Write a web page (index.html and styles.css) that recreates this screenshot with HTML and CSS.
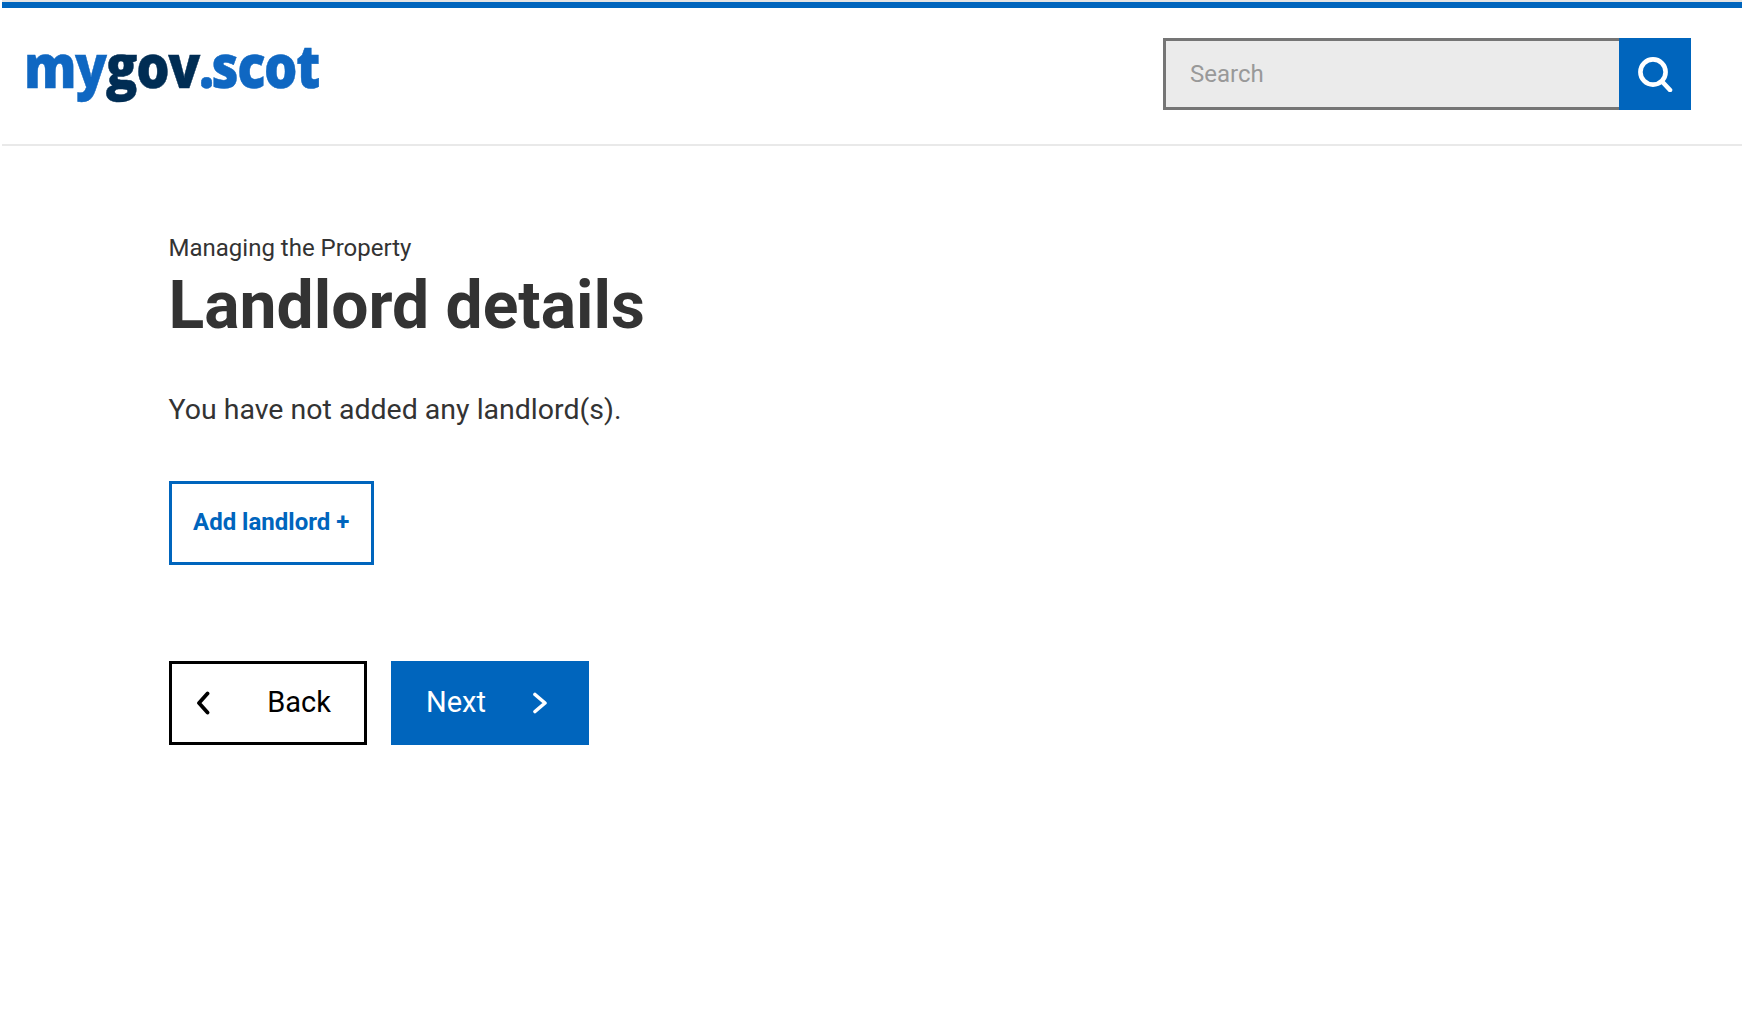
FILE: index.html
```html
<!DOCTYPE html>
<html lang="en">
<head>
<meta charset="utf-8">
<title>Landlord details</title>
<link rel="stylesheet" href="styles.css">
</head>
<body>
<div class="page">
  <header class="site-header">
    <a class="logo" href="#"><span class="logo-light">my</span><span class="logo-dark">gov</span><span class="logo-light logo-dot">.</span><span class="logo-light">scot</span></a>
    <form class="search">
      <input class="search-input" type="text" placeholder="Search">
      <button class="search-button" type="button" aria-label="Search">
        <svg width="36" height="36" viewBox="0 0 36 36" fill="none" stroke="#fff" stroke-width="4.6" stroke-linecap="round"><circle cx="16" cy="16" r="12.6"/><path d="M25.5 26l7.5 8"/></svg>
      </button>
    </form>
  </header>
  <main class="content">
    <p class="section-label">Managing the Property</p>
    <h1 class="title">Landlord details</h1>
    <p class="lead">You have not added any landlord(s).</p>
    <button class="btn btn-add" type="button">Add landlord +</button>
    <div class="nav-buttons">
      <button class="btn btn-back" type="button">
        <svg width="14" height="24" viewBox="0 0 14 24" fill="none" stroke="#000" stroke-width="3.8" stroke-linecap="round" stroke-linejoin="round"><path d="M11.5 2.5L3 12l8.500 9.500"/></svg>
        <span class="btn-label">Back</span>
      </button>
      <button class="btn btn-next" type="button">
        <span class="btn-label">Next</span>
        <svg width="16" height="22" viewBox="0 0 16 22" fill="none" stroke="#fff" stroke-width="3.6" stroke-linecap="round" stroke-linejoin="round"><path d="M3 2.500l10 8.500-10 8.500"/></svg>
      </button>
    </div>
  </main>
</div>
</body>
</html>
```
FILE: styles.css
```css
* { box-sizing: border-box; }
html, body { margin: 0; padding: 0; background: #fff; }
body { font-family: Roboto, "Liberation Sans", sans-serif; color: #333; min-height: 1012px; }
.page { padding-left: 2px; }
.site-header {
  margin-top: 2px;
  height: 144px;
  border-top: 6px solid #0065bd;
  border-bottom: 2px solid #e9e9e9;
  display: flex;
  justify-content: space-between;
  align-items: flex-start;
  padding: 30px 51px 0 22px;
  background: #fff;
  box-shadow: 0 -2px 0 #e4e4e4;
}
.logo {
  font-family: "Open Sans", sans-serif;
  font-weight: 800;
  font-size: 60px;
  line-height: 54px;
  letter-spacing: -1.6px;
  text-decoration: none;
  white-space: nowrap;
  transform: scaleX(0.875);
  transform-origin: left center;
  -webkit-text-stroke: 0.5px currentColor;
}
.logo-light { color: #0f67c2; }
.logo-dark { color: #002d54; }
.logo-dot { letter-spacing: -3px; }
.search { display: flex; width: 528px; height: 72px; }
.search-input {
  flex: 1;
  min-width: 0;
  border: 3px solid #757575;
  border-right: 0;
  background: #ebebeb;
  padding: 0 0 0 24px;
  font-family: Roboto, sans-serif;
  font-size: 24px;
  outline: 0;
  border-radius: 0;
}
.search-input::placeholder { color: #999; opacity: 1; }
.search-button {
  width: 72px;
  height: 72px;
  padding: 0;
  border: 0;
  background: #0065bd;
  display: flex;
  align-items: center;
  justify-content: center;
}
.content { padding: 87px 0 0 167px; }
.section-label { margin: 0 0 0 -0.5px; font-size: 24px; line-height: 30px; color: #333; }
.title { margin: 7px 0 0 -0.5px; font-size: 66px; line-height: 72px; font-weight: 700; color: #333; }
.lead { margin: 48px 0 0 -0.5px; font-size: 28.5px; line-height: 40px; color: #333; }
.btn {
  height: 84px;
  font-family: Roboto, sans-serif;
  border-radius: 0;
  display: flex;
  align-items: center;
  padding: 0;
  background: #fff;
}
.btn-add {
  margin-top: 51px;
  width: 205px;
  padding-left: 21px;
  padding-bottom: 3px;
  border: 3px solid #0065bd;
  color: #0065bd;
  font-size: 24px;
  font-weight: 700;
}
.nav-buttons { display: flex; gap: 24px; margin-top: 96px; }
.btn-back, .btn-next { width: 198px; font-size: 29px; justify-content: space-between; }
.btn-label { margin-bottom: 2px; }
.btn-back { border: 3px solid #000; color: #000; padding: 0 33px 0 24px; }
.btn-next { border: 0; background: #0065bd; color: #fff; padding: 0 41px 0 35px; }
```
